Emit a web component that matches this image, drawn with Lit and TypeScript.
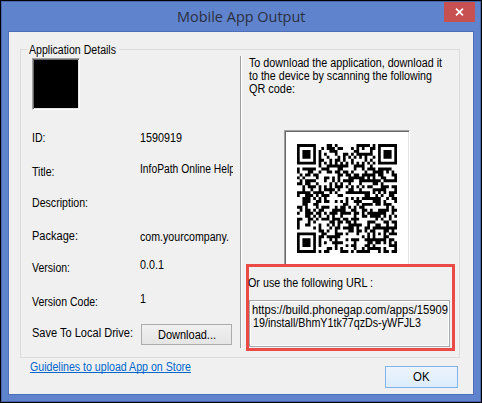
import { LitElement, html, css, svg } from "lit";
import { customElement, property } from "lit/decorators.js";

const URL_LINES = ["https://build.phonegap.com/apps/15909", "19/install/BhmY1tk77qzDs-yWFJL3"];

/* ---- QR encoder: version 5, level M, byte mode, mask 2 ---- */
const SIZE = 37;
const EXP: number[] = [];
const LOG: number[] = [];
for (let i = 0, x = 1; i < 255; i++) {
  EXP[i] = x;
  LOG[x] = i;
  x = x << 1;
  if (x > 255) x ^= 0x11d;
}
const mul = (a: number, b: number) => (a && b ? EXP[(LOG[a] + LOG[b]) % 255] : 0);

function remainder(data: number[], degree: number): number[] {
  let gen = [1];
  for (let i = 0; i < degree; i++) {
    const next = new Array(gen.length + 1).fill(0);
    gen.forEach((g, j) => {
      next[j] ^= g;
      next[j + 1] ^= mul(g, EXP[i]);
    });
    gen = next;
  }
  const res = [...data, ...new Array(degree).fill(0)];
  for (let i = 0; i < data.length; i++) {
    const f = res[i];
    if (f) gen.forEach((g, j) => (res[i + j] ^= mul(g, f)));
  }
  return res.slice(data.length);
}

function qrMatrix(text: string): boolean[][] {
  const bits: number[] = [];
  const push = (v: number, n: number) => {
    for (let i = n - 1; i >= 0; i--) bits.push((v >> i) & 1);
  };
  push(4, 4);
  push(text.length, 8);
  for (const c of text) push(c.charCodeAt(0), 8);
  push(0, 4);
  const words: number[] = [];
  for (let i = 0; i < bits.length; i += 8) words.push(parseInt(bits.slice(i, i + 8).join(""), 2));
  for (let pad = 0xec; words.length < 86; pad ^= 0xec ^ 0x11) words.push(pad);
  const blocks = [words.slice(0, 43), words.slice(43)];
  const ecc = blocks.map((b) => remainder(b, 24));
  const stream: number[] = [];
  for (let i = 0; i < 43; i++) blocks.forEach((b) => stream.push(b[i]));
  for (let i = 0; i < 24; i++) ecc.forEach((b) => stream.push(b[i]));

  const m: boolean[][] = Array.from({ length: SIZE }, () => new Array(SIZE).fill(false));
  const used: boolean[][] = Array.from({ length: SIZE }, () => new Array(SIZE).fill(false));
  const set = (r: number, c: number, v: boolean) => {
    if (r < 0 || c < 0 || r >= SIZE || c >= SIZE) return;
    m[r][c] = v;
    used[r][c] = true;
  };
  for (let i = 0; i < SIZE; i++) {
    set(6, i, i % 2 === 0);
    set(i, 6, i % 2 === 0);
  }
  for (const [cr, cc] of [[3, 3], [3, SIZE - 4], [SIZE - 4, 3]])
    for (let r = -4; r <= 4; r++)
      for (let c = -4; c <= 4; c++) {
        const d = Math.max(Math.abs(r), Math.abs(c));
        set(cr + r, cc + c, d !== 2 && d !== 4);
      }
  for (let r = -2; r <= 2; r++)
    for (let c = -2; c <= 2; c++) set(30 + r, 30 + c, Math.max(Math.abs(r), Math.abs(c)) !== 1);
  const format = "101111001111100".split("").reverse().map((b) => b === "1");
  for (let i = 0; i <= 5; i++) set(i, 8, format[i]);
  set(7, 8, format[6]);
  set(8, 8, format[7]);
  set(8, 7, format[8]);
  for (let i = 9; i < 15; i++) set(8, 14 - i, format[i]);
  for (let i = 0; i < 8; i++) set(8, SIZE - 1 - i, format[i]);
  for (let i = 8; i < 15; i++) set(SIZE - 15 + i, 8, format[i]);
  set(SIZE - 8, 8, true);

  let n = 0;
  for (let right = SIZE - 1; right >= 1; right -= 2) {
    if (right === 6) right = 5;
    for (let v = 0; v < SIZE; v++)
      for (let j = 0; j < 2; j++) {
        const c = right - j;
        const r = ((right + 1) & 2) === 0 ? SIZE - 1 - v : v;
        if (used[r][c]) continue;
        const bit = n < stream.length * 8 ? (stream[n >> 3] >> (7 - (n & 7))) & 1 : 0;
        m[r][c] = (bit === 1) !== (c % 3 === 0);
        n++;
      }
  }
  return m;
}

@customElement("qr-code")
export class QrCode extends LitElement {
  @property() value = "";
  static styles = css`
    :host { display: block; }
    svg { display: block; width: 100%; height: 100%; }
  `;
  render() {
    const m = qrMatrix(this.value);
    let d = "";
    m.forEach((row, r) => {
      for (let c = 0; c < SIZE; c++) {
        if (!row[c]) continue;
        let e = c;
        while (e < SIZE && row[e]) e++;
        d += `M${c} ${r}h${e - c}v1h${c - e}z`;
        c = e;
      }
    });
    return html`<svg viewBox="0 0 37 37" preserveAspectRatio="none">${svg`<path d=${d} />`}</svg>`;
  }
}

/* A single line of text set to an exact width; baseline sits 12px below the top. */
@customElement("fit-text")
export class FitText extends LitElement {
  @property() text = "";
  @property({ type: Number }) width = 0;
  static styles = css`
    :host { display: block; height: 16px; flex: none; }
    svg { display: block; overflow: visible; fill: currentColor; }
  `;
  render() {
    return html`<svg width=${this.width} height="16">
      <text x="0" y="12" textLength=${this.width} lengthAdjust="spacingAndGlyphs">${this.text}</text>
    </svg>`;
  }
}

const t = (text: string, width: number) => html`<fit-text .text=${text} .width=${width}></fit-text>`;

const FIELDS = [
  { label: "ID:", lw: 13.5, value: "1590919", vw: 42, shift: 0, h: 34 },
  { label: "Title:", lw: 22.5, value: "InfoPath Online Help", vw: 95, shift: -3, h: 31 },
  { label: "Description:", lw: 56, value: "", vw: 0, shift: 0, h: 33 },
  { label: "Package:", lw: 46, value: "com.yourcompany.", vw: 89, shift: 1, h: 32 },
  { label: "Version:", lw: 38, value: "0.0.1", vw: 24, shift: -3, h: 34 },
  { label: "Version Code:", lw: 66, value: "1", vw: 6, shift: -3, h: 31 },
];

@customElement("app-root")
export class AppRoot extends LitElement {
  static styles = css`
    * { box-sizing: border-box; }
    :host {
      display: block; width: 482px; height: 403px; overflow: hidden;
      font: 12px "Liberation Sans", Arial, sans-serif; color: #000;
    }
    .window {
      width: 482px; height: 403px; border: 1px solid #000; background: #6083cd;
      padding: 0 7px 7px; display: flex; flex-direction: column;
      box-shadow: inset 0 0 0 1px #4865a8;
    }
    .title { height: 30px; flex: none; display: grid; grid-template-columns: 168.5px 1fr 31px; padding-top: 1px; margin-right: -1px; }
    .title fit-text { grid-column: 2; margin-top: 8px; font: 15px "Open Sans", sans-serif; color: #2b3040; }
    .close { width: 31px; height: 20px; background: #c75050; display: grid; place-items: center; }
    .client {
      flex: 1; min-height: 0; border: 1px solid #4b6fbb; background: #f0f0f0; padding: 10px 12px 0 11px;
      display: flex; flex-direction: column;
    }
    .group {
      margin-top: 7px; height: 309px; flex: none; width: 440px; border: 1px solid #dcdcdc;
      display: grid; grid-template-columns: 219px 1fr; align-items: start;
    }
    .left { padding-left: 11px; }
    .legend { width: 92px; margin: -8px 0 0 -5px; padding-left: 2px; height: 16px; background: #f0f0f0; }
    .icon { width: 48px; height: 52px; background: #000; border: 1px solid; border-color: #a0a0a0 #fff #fff #a0a0a0; box-shadow: inset 1px 1px #696969, inset -1px -1px #e3e3e3; }
    .fields { padding-top: 20px; }
    .field { display: grid; grid-template-columns: 108px 93px; align-items: start; }
    .clip { overflow: hidden; }
    .save { display: grid; grid-template-columns: 109px 91px; align-items: start; }
    .button {
      height: 21px; border: 1px solid #acacac; background: linear-gradient(#f0f0f0, #e5e5e5);
      display: flex; justify-content: center; padding-top: 2px;
    }
    .save .button { margin-top: -1px; }
    .right { margin-top: 6px; height: 292px; border-left: 1px solid #a0a0a0; box-shadow: inset 1px 0 #fff; padding-left: 8px; }
    .copy { margin-top: -1px; }
    .copy fit-text { height: 13px; }
    .frame {
      width: 126px; height: 136px; margin: 36px 0 0 35px; background: #fff; border: 1px solid;
      border-color: #a0a0a0 #fff #fff #a0a0a0; box-shadow: inset 1px 1px #696969, inset -1px -1px #e3e3e3; padding: 13px 12px;
    }
    qr-code { width: 100px; height: 109px; }
    .mark { position: relative; width: 209px; height: 87px; margin: -2px 0 0 -3px; border: 3px solid #eb4b46; background: #f0f0f0; padding-top: 8px; }
    .mark > fit-text { margin-left: -1px; }
    .url { width: 201px; height: 47px; margin-top: 9px; border: 1px solid #a6a6ab; padding: 1px 0 0 2px; box-shadow: inset 0 0 0 1px #fff; }
    .url fit-text { height: 13px; }
    .url fit-text:last-child { margin-left: 1px; }
    .foot { display: flex; justify-content: space-between; padding-left: 9.5px; width: 438px; }
    .link { color: #0066cc; width: 161px; height: 14px; margin-top: 1px; border-bottom: 1px solid #0066cc; }
    .ok { width: 73px; height: 22px; margin-top: 8px; border-color: #7eb4ea; background: linear-gradient(#ecf4fc, #dcecfc); }
  `;
  render() {
    return html`<div class="window">
      <div class="title">
        ${t("Mobile App Output", 128.5)}
        <div class="close">
          <svg width="9" height="8" viewBox="0 0 9 8"><path d="M1 .7L8 7.3M8 .7L1 7.3" stroke="#fff" stroke-width="1.7" /></svg>
        </div>
      </div>
      <div class="client">
        <div class="group">
          <div class="left">
            <div class="legend">${t("Application Details", 87)}</div>
            <div class="icon"></div>
            <div class="fields">
              ${FIELDS.map(
                (f) => html`<div class="field" style="height:${f.h}px">
                  ${t(f.label, f.lw)}
                  <div class=${f.vw > 93 ? "clip" : ""} style="margin-top:${f.shift}px">${f.value ? t(f.value, f.vw) : ""}</div>
                </div>`
              )}
              <div class="save">${t("Save To Local Drive:", 101)}<div class="button">${t("Download...", 58)}</div></div>
            </div>
          </div>
          <div class="right">
            <div class="copy">
              ${t("To download the application, download it", 193)}
              ${t("to the device by scanning the following", 183)}
              ${t("QR code:", 46)}
            </div>
            <div class="frame"><qr-code .value=${URL_LINES.join("")}></qr-code></div>
            <div class="mark">
              ${t("Or use the following URL :", 125)}
              <div class="url">${t(URL_LINES[0], 196)}${t(URL_LINES[1], 168)}</div>
            </div>
          </div>
        </div>
        <div class="foot">
          <div class="link">${t("Guidelines to upload App on Store", 161)}</div>
          <div class="button ok">${t("OK", 16.5)}</div>
        </div>
      </div>
    </div>`;
  }
}
